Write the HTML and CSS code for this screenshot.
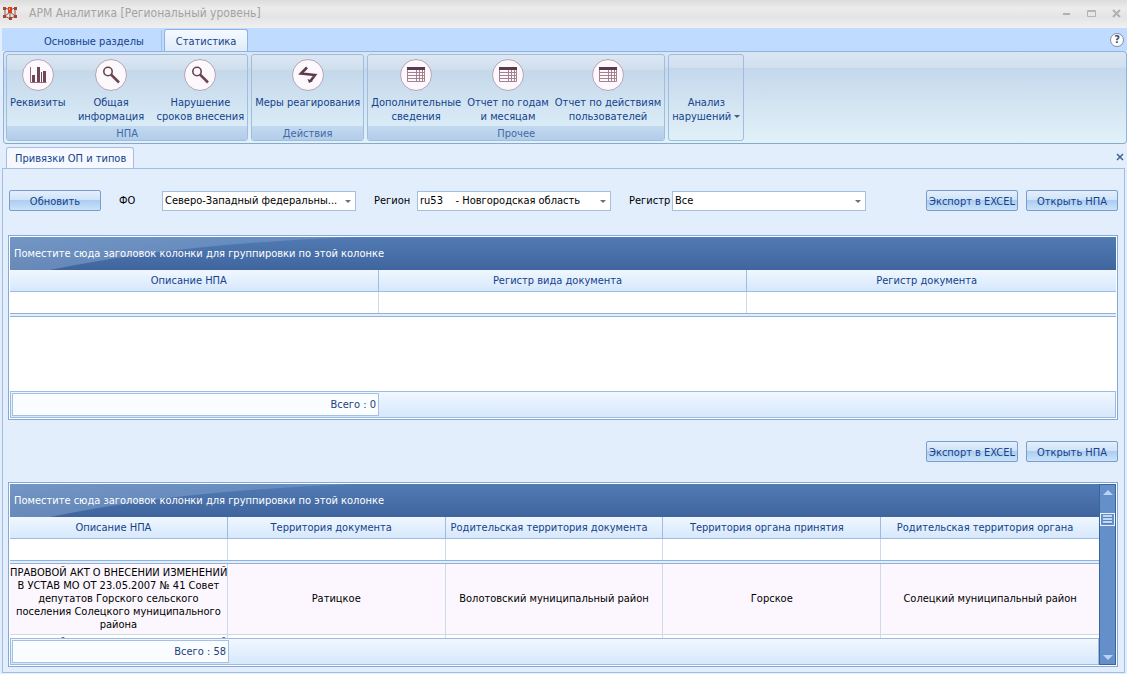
FILE: index.html
```html
<!DOCTYPE html>
<html lang="ru">
<head>
  <meta charset="utf-8">
  <title>АРМ Аналитика</title>
  <link rel="stylesheet" href="styles.css">
</head>

<body>
  <header class="titlebar">
    <svg class="app-icon" width="16" height="16" viewBox="0 0 16 16">
      <path d="M3 3 8 5 13 3M3 3v8l5 3 5-3V3M3 11l5-4 5 4M8 5v9" fill="none" stroke="#8a5048"/>
      <g fill="#a8452f">
        <rect x="1" y="2" width="3" height="3"/>
        <rect x="12" y="2" width="3" height="3"/>
        <rect x="6" y="2" width="4" height="6" fill="#d8401c"/>
        <rect x="1" y="10" width="3" height="3"/>
        <rect x="12" y="10" width="3" height="3"/>
        <rect x="7" y="12" width="3" height="3"/>
      </g>
      <rect x="7" y="3" width="1" height="2" fill="#f4a64c"/>
    </svg>
    <h1>АРМ Аналитика [Региональный уровень]</h1>
    <div class="window-buttons">
      <button aria-label="Свернуть"><svg width="9" height="9"><path d="M1 5h7" stroke="#b0b0b0" stroke-width="2"/></svg></button>
      <button aria-label="Развернуть"><svg width="9" height="9"><path d="M.5 1.5h8v6h-8zM1 2.5h7" fill="none" stroke="#b4b4b4"/></svg></button>
      <button aria-label="Закрыть"><svg width="9" height="9"><path d="M1 1l7 7M8 1l-7 7" stroke="#b0b0b0" stroke-width="2"/></svg></button>
    </div>
  </header>

  <nav class="ribbon-tabs">
    <button class="ribbon-tab">Основные разделы</button>
    <button class="ribbon-tab active">Статистика</button>
    <button class="help" aria-label="Справка">?</button>
  </nav>

  <div class="ribbon">
    <section class="group">
      <div class="group-items">
        <button class="tool">
          <svg width="32" height="32" viewBox="0 0 32 32"><circle cx="16" cy="16" r="15.5"/><path d="M8.500 8v15.500h16" fill="none" stroke="#a06a7c"/><path d="M10 16h3v7h-3zM15 8h3v15h-3zM19 13h1v10h-1zM21 12h3v11h-3z" fill="#6d4658"/></svg>
          Реквизиты
        </button>
        <button class="tool wide">
          <svg width="32" height="32" viewBox="0 0 32 32"><circle cx="16" cy="16" r="15.5"/><circle cx="13" cy="12.5" r="4.2" fill="none" stroke="#684650" stroke-width="1.6"/><path d="M16 15.500l8 8" stroke="#684650" stroke-width="2.5"/></svg>
          Общая<br>информация
        </button>
        <button class="tool">
          <svg width="32" height="32" viewBox="0 0 32 32"><circle cx="16" cy="16" r="15.5"/><circle cx="13" cy="12.5" r="4.2" fill="none" stroke="#684650" stroke-width="1.6"/><path d="M16 15.500l8 8" stroke="#684650" stroke-width="2.5"/></svg>
          Нарушение<br>сроков внесения
        </button>
      </div>
      <h2>НПА</h2>
    </section>
    <section class="group">
      <div class="group-items">
        <button class="tool">
          <svg width="32" height="32" viewBox="0 0 32 32"><circle cx="16" cy="16" r="15.5"/><path d="M15 8.500l-6 6 14 1.500-4.500 6" fill="none" stroke="#5c3a4c" stroke-width="2.6"/><path d="M15.500 20l5.500 2-4 2z" fill="#5c3a4c"/></svg>
          Меры реагирования
        </button>
      </div>
      <h2>Действия</h2>
    </section>
    <section class="group">
      <div class="group-items">
        <button class="tool">
          <svg width="32" height="32" viewBox="0 0 32 32"><circle cx="16" cy="16" r="15.5"/><path d="M7.500 9v13.500h17V9M7 13.500h18M7 16.500h18M7 19.500h18M16.500 11v12M19.500 11v12M22.500 11v12" fill="none" stroke="#a5808f"/><path d="M7 8h18v3H7z" fill="#5c3a4c"/></svg>
          Дополнительные<br>сведения
        </button>
        <button class="tool">
          <svg width="32" height="32" viewBox="0 0 32 32"><circle cx="16" cy="16" r="15.5"/><path d="M7.500 9v13.500h17V9M7 13.500h18M7 16.500h18M7 19.500h18M16.500 11v12M19.500 11v12M22.500 11v12" fill="none" stroke="#a5808f"/><path d="M7 8h18v3H7z" fill="#5c3a4c"/></svg>
          Отчет по годам<br>и месяцам
        </button>
        <button class="tool">
          <svg width="32" height="32" viewBox="0 0 32 32"><circle cx="16" cy="16" r="15.5"/><path d="M7.500 9v13.500h17V9M7 13.500h18M7 16.500h18M7 19.500h18M16.500 11v12M19.500 11v12M22.500 11v12" fill="none" stroke="#a5808f"/><path d="M7 8h18v3H7z" fill="#5c3a4c"/></svg>
          Отчет по действиям<br>пользователей
        </button>
      </div>
      <h2>Прочее</h2>
    </section>
    <section class="group plain">
      <button class="tool menu">Анализ<br>нарушений <span class="caret"></span></button>
    </section>
  </div>

  <div class="doc-tabs">
    <button class="doc-tab">Привязки ОП и типов</button>
    <button class="doc-close" aria-label="Закрыть вкладку"><svg width="8" height="8"><path d="M1 1l6 6M7 1l-6 6" stroke="#3f6193" stroke-width="1.5"/></svg></button>
  </div>

  <main class="page">
    <form class="toolbar">
      <button type="button" class="btn">Обновить</button>
      <div class="field">
        <label for="fo">ФО</label>
        <div class="combo"><select id="fo"><option>Северо-Западный федеральны...</option></select></div>
      </div>
      <div class="field">
        <label for="region">Регион</label>
        <div class="combo"><select id="region"><option>ru53&nbsp;&nbsp;&nbsp; - Новгородская область</option></select></div>
      </div>
      <div class="field">
        <label for="register">Регистр</label>
        <div class="combo"><select id="register"><option>Все</option></select></div>
      </div>
      <div class="actions">
        <button type="button" class="btn">Экспорт в EXCEL</button>
        <button type="button" class="btn">Открыть НПА</button>
      </div>
    </form>

    <section class="grid">
      <div class="grid-main">
        <div class="group-panel">
          <svg class="swoosh" width="370" height="33" viewBox="0 0 370 33"><defs><linearGradient id="shine"><stop offset="0" stop-color="#a3bfe0"/><stop offset="1" stop-color="#7fa3d2"/></linearGradient></defs><path d="M0 0H350Q170 6 40 33H0z" fill="url(#shine)"/></svg>
          <span>Поместите сюда заголовок колонки для группировки по этой колонке</span>
        </div>
        <div class="grid-view">
          <table>
            <thead>
              <tr><th>Описание НПА</th><th>Регистр вида документа</th><th>Регистр документа</th></tr>
              <tr class="filter">
                <td><input type="text" aria-label="Описание НПА"></td>
                <td><input type="text" aria-label="Регистр вида документа"></td>
                <td><input type="text" aria-label="Регистр документа"></td>
              </tr>
              <tr class="split"><td colspan="3"></td></tr>
            </thead>
          </table>
        </div>
        <div class="summary three"><output>Всего : 0</output></div>
      </div>
    </section>

    <div class="toolbar second">
      <div class="actions">
        <button type="button" class="btn">Экспорт в EXCEL</button>
        <button type="button" class="btn">Открыть НПА</button>
      </div>
    </div>

    <section class="grid">
      <div class="grid-main">
        <div class="group-panel">
          <svg class="swoosh" width="370" height="33" viewBox="0 0 370 33"><path d="M0 0H350Q170 6 40 33H0z" fill="url(#shine)"/></svg>
          <span>Поместите сюда заголовок колонки для группировки по этой колонке</span>
        </div>
        <div class="grid-view">
          <table>
            <thead>
              <tr>
                <th>Описание НПА</th>
                <th>Территория документа</th>
                <th>Родительская территория документа</th>
                <th>Территория органа принятия</th>
                <th>Родительская территория органа</th>
              </tr>
              <tr class="filter">
                <td><input type="text" aria-label="Описание НПА"></td>
                <td><input type="text" aria-label="Территория документа"></td>
                <td><input type="text" aria-label="Родительская территория документа"></td>
                <td><input type="text" aria-label="Территория органа принятия"></td>
                <td><input type="text" aria-label="Родительская территория органа"></td>
              </tr>
              <tr class="split"><td colspan="5"></td></tr>
            </thead>
            <tbody>
              <tr class="odd">
                <td>ПРАВОВОЙ АКТ О ВНЕСЕНИИ ИЗМЕНЕНИЙ<br>В УСТАВ МО ОТ 23.05.2007 № 41 Совет<br>депутатов Горского сельского<br>поселения Солецкого муниципального<br>района</td>
                <td>Ратицкое</td>
                <td>Волотовский муниципальный район</td>
                <td>Горское</td>
                <td>Солецкий муниципальный район</td>
              </tr>
              <tr>
                <td>ПРАВОВОЙ АКТ О ВНЕСЕНИИ ИЗМЕНЕНИЙ</td>
                <td></td>
                <td></td>
                <td></td>
                <td></td>
              </tr>
            </tbody>
          </table>
        </div>
        <div class="summary five"><output>Всего : 58</output></div>
      </div>
      <div class="scrollbar">
        <button class="up" aria-label="Вверх"></button>
        <div class="thumb"></div>
        <button class="down" aria-label="Вниз"></button>
      </div>
    </section>
  </main>
</body>
</html>
```
FILE: styles.css
```css
* {
  box-sizing: border-box;
}

body {
  margin: 0;
  min-height: 100vh;
  display: flex;
  flex-direction: column;
  background: #e3eefd;
  color: #000;
  font: 11px/13px "DejaVu Sans Condensed", "Noto Sans", sans-serif;
}

button,
input,
select {
  margin: 0;
  padding: 0;
  border: 0;
  background: none;
  color: inherit;
  font: inherit;
}

h1,
h2 {
  margin: 0;
  font-weight: normal;
}

/* window title */
.titlebar {
  display: flex;
  align-items: center;
  height: 28px;
  padding: 0 6px 2px 2px;
  background: linear-gradient(#dcdcdc, #ececec 30%, #e4e4e4 60%, #f0f0f0);
}

.titlebar h1 {
  flex: 1;
  margin-left: 11px;
  color: #a3a3a3;
  font-size: 12px;
}

.window-buttons {
  display: flex;
  gap: 16px;
}

.window-buttons svg,
.doc-close svg {
  display: block;
}

/* ribbon */
.ribbon-tabs {
  display: flex;
  align-items: flex-end;
  height: 23px;
  margin-left: 2px;
  padding: 0 3px 0 24px;
  background: #bfdbff;
  color: #15428b;
}

.ribbon-tab {
  height: 21px;
  padding: 1px 17px 0 18px;
  border-right: 1px solid #9dc0ec;
}

.ribbon-tab.active {
  height: 22px;
  padding: 1px 11px 0;
  margin: 0 auto 0 2px;
  border: 1px solid #8db2e3;
  border-bottom: 0;
  border-radius: 3px 3px 0 0;
  background: linear-gradient(#f6faff, #dfebf8);
}

.help {
  width: 14px;
  height: 14px;
  margin-bottom: 4px;
  border: 1px solid #7d8ba3;
  border-radius: 50%;
  background: #fff;
  color: #44506a;
  font-weight: bold;
  line-height: 12px;
}

.ribbon {
  display: flex;
  gap: 3px;
  height: 93px;
  margin-left: 3px;
  padding: 2px;
  border: 1px solid #8db2e3;
  border-bottom-color: #88a9cb;
  border-radius: 4px;
  background: linear-gradient(#dbe6f4, #d1dfef 17%, #c5d7ec 18%, #d9eaf5 75%, #e0f1f8);
  color: #15428b;
}

.group {
  display: flex;
  flex-direction: column;
  border: 1px solid #9ebddf;
  border-radius: 3px;
  background: linear-gradient(#dce7f3, #d0dfed 17%, #c5d8ea 18%, #d7e9f5 75%, #dceffa);
  overflow: hidden;
}

.group-items {
  display: flex;
  flex: 1;
}

.group h2 {
  height: 14px;
  background: linear-gradient(#c2d9f0, #b3cce9);
  color: #3e6aaa;
  font-size: 11px;
  line-height: 15px;
  text-align: center;
}

.tool {
  display: flow-root;
  padding: 4px 3px 0;
  line-height: 14px;
  text-align: center;
  vertical-align: top;
  align-self: flex-start;
}

.tool.wide {
  min-width: 85px;
}

.tool svg {
  display: block;
  margin: 0 auto 5px;
}

.tool svg circle:first-child {
  fill: #fdf8fb;
  stroke: #b3a3b8;
}

.plain {
  background: none;
}

.tool.menu {
  padding-top: 41px;
}

.caret {
  display: inline-block;
  border: 3px solid transparent;
  border-top-color: #4a5a78;
  border-bottom: 0;
  vertical-align: 2px;
}

/* document tabs */
.doc-tabs {
  display: flex;
  align-items: flex-end;
  justify-content: space-between;
  height: 24px;
  padding: 0 3px 0 6px;
}

.doc-tab {
  height: 21px;
  padding: 0 7px 0 8px;
  border: 1px solid #a3bde3;
  border-bottom: 0;
  border-radius: 3px 3px 0 0;
  background: #f5f9ff;
  color: #15428b;
}

.doc-close {
  margin-bottom: 7px;
}

.page {
  flex: 1;
  margin: 0 2px 1px;
  padding: 21px 6px 4px 5px;
  border: 1px solid #a3bde3;
  background: #e3eefd;
}

.toolbar {
  display: flex;
  align-items: center;
  gap: 18px;
  margin: 0 0 24px 1px;
}

.toolbar.second {
  margin: 21px 0 20px;
}

.btn {
  width: 92px;
  height: 21px;
  padding-top: 1px;
  border: 1px solid #7b9dca;
  border-radius: 2px;
  background: linear-gradient(#e3effc, #cfe3f9 45%, #aecdf0 50%, #c8e3fb);
  color: #15428b;
  white-space: nowrap;
}

.field {
  display: flex;
  align-items: center;
}

.field label {
  width: 43px;
}

.combo {
  position: relative;
}

.combo select {
  appearance: none;
  display: block;
  width: 194px;
  height: 20px;
  padding: 0 18px 0 2px;
  border: 1px solid #a5bfe0;
  background: #fff;
}

.combo::after {
  content: "";
  position: absolute;
  right: 5px;
  top: 9px;
  border: 3px solid transparent;
  border-top-color: #66707f;
  border-bottom: 0;
  pointer-events: none;
}

.actions {
  display: flex;
  gap: 8px;
  margin-left: auto;
}

/* data grids */
.grid {
  display: flex;
  padding: 1px;
  border: 1px solid #86a8d6;
  background: #fff;
}

.grid-main {
  flex: 1;
  min-width: 0;
}

.group-panel {
  position: relative;
  height: 33px;
  padding-left: 4px;
  background: linear-gradient(#527bb3, #40659e);
  color: #fff;
  line-height: 33px;
}

.group-panel span {
  position: relative;
}

.swoosh {
  position: absolute;
  left: 0;
  top: 0;
  fill-opacity: .4;
}

.grid-view {
  height: 121px;
  overflow: hidden;
}

table {
  width: 100%;
  table-layout: fixed;
  border-collapse: separate;
  border-spacing: 0;
}

th {
  height: 22px;
  padding: 0 10px 0 0;
  border-right: 1px solid #9ebce2;
  border-bottom: 1px solid #9ebce2;
  background: linear-gradient(#f0f7ff, #d6e8fc);
  color: #15428b;
  font-weight: normal;
  white-space: nowrap;
}

td {
  padding: 2px 0 3px;
  border-right: 1px solid #ccdaea;
  border-bottom: 1px solid #ccdaea;
  text-align: center;
  white-space: nowrap;
}

th:last-child,
td:last-child {
  border-right: 0;
}

.filter td {
  height: 21px;
  padding: 0 2px;
  border-bottom: 0;
}

.filter input {
  display: block;
  width: 100%;
  height: 19px;
}

.split td {
  height: 4px;
  padding: 0;
  border: solid #8fb1dc;
  border-width: 1px 0;
  background: #e3eefd;
}

.odd td {
  background: #fcf7fe;
}

.summary {
  height: 27px;
  padding: 1px;
  border: 1px solid #9ebce2;
  background: linear-gradient(#f0f7ff, #d6e8fc);
  color: #1f3f78;
}

.summary output {
  display: block;
  height: 23px;
  padding-right: 2px;
  border: 1px solid #a5c0e2;
  background: #fafdff;
  line-height: 21px;
  text-align: right;
}

.three output {
  width: 33.3%;
}

.five output {
  width: 20%;
}

.scrollbar {
  display: flex;
  flex-direction: column;
  width: 17px;
  border: 1px solid #3c639c;
  background: #658fc9;
}

.scrollbar button {
  height: 14px;
}

.scrollbar button::before {
  content: "";
  display: block;
  width: 0;
  margin: auto;
  border: 5px solid transparent;
}

.scrollbar .up::before {
  border-top: 0;
  border-bottom-color: #b8d3f5;
}

.scrollbar .down {
  margin-top: auto;
}

.scrollbar .down::before {
  border-bottom: 0;
  border-top-color: #b8d3f5;
}

.thumb {
  height: 13px;
  margin-top: 14px;
  padding: 1px 2px;
  border: 1px solid #e8f1fc;
  background: repeating-linear-gradient(#c3daf6 0 2px, #5a82ba 2px 3px) content-box #c3daf6;
}
```
